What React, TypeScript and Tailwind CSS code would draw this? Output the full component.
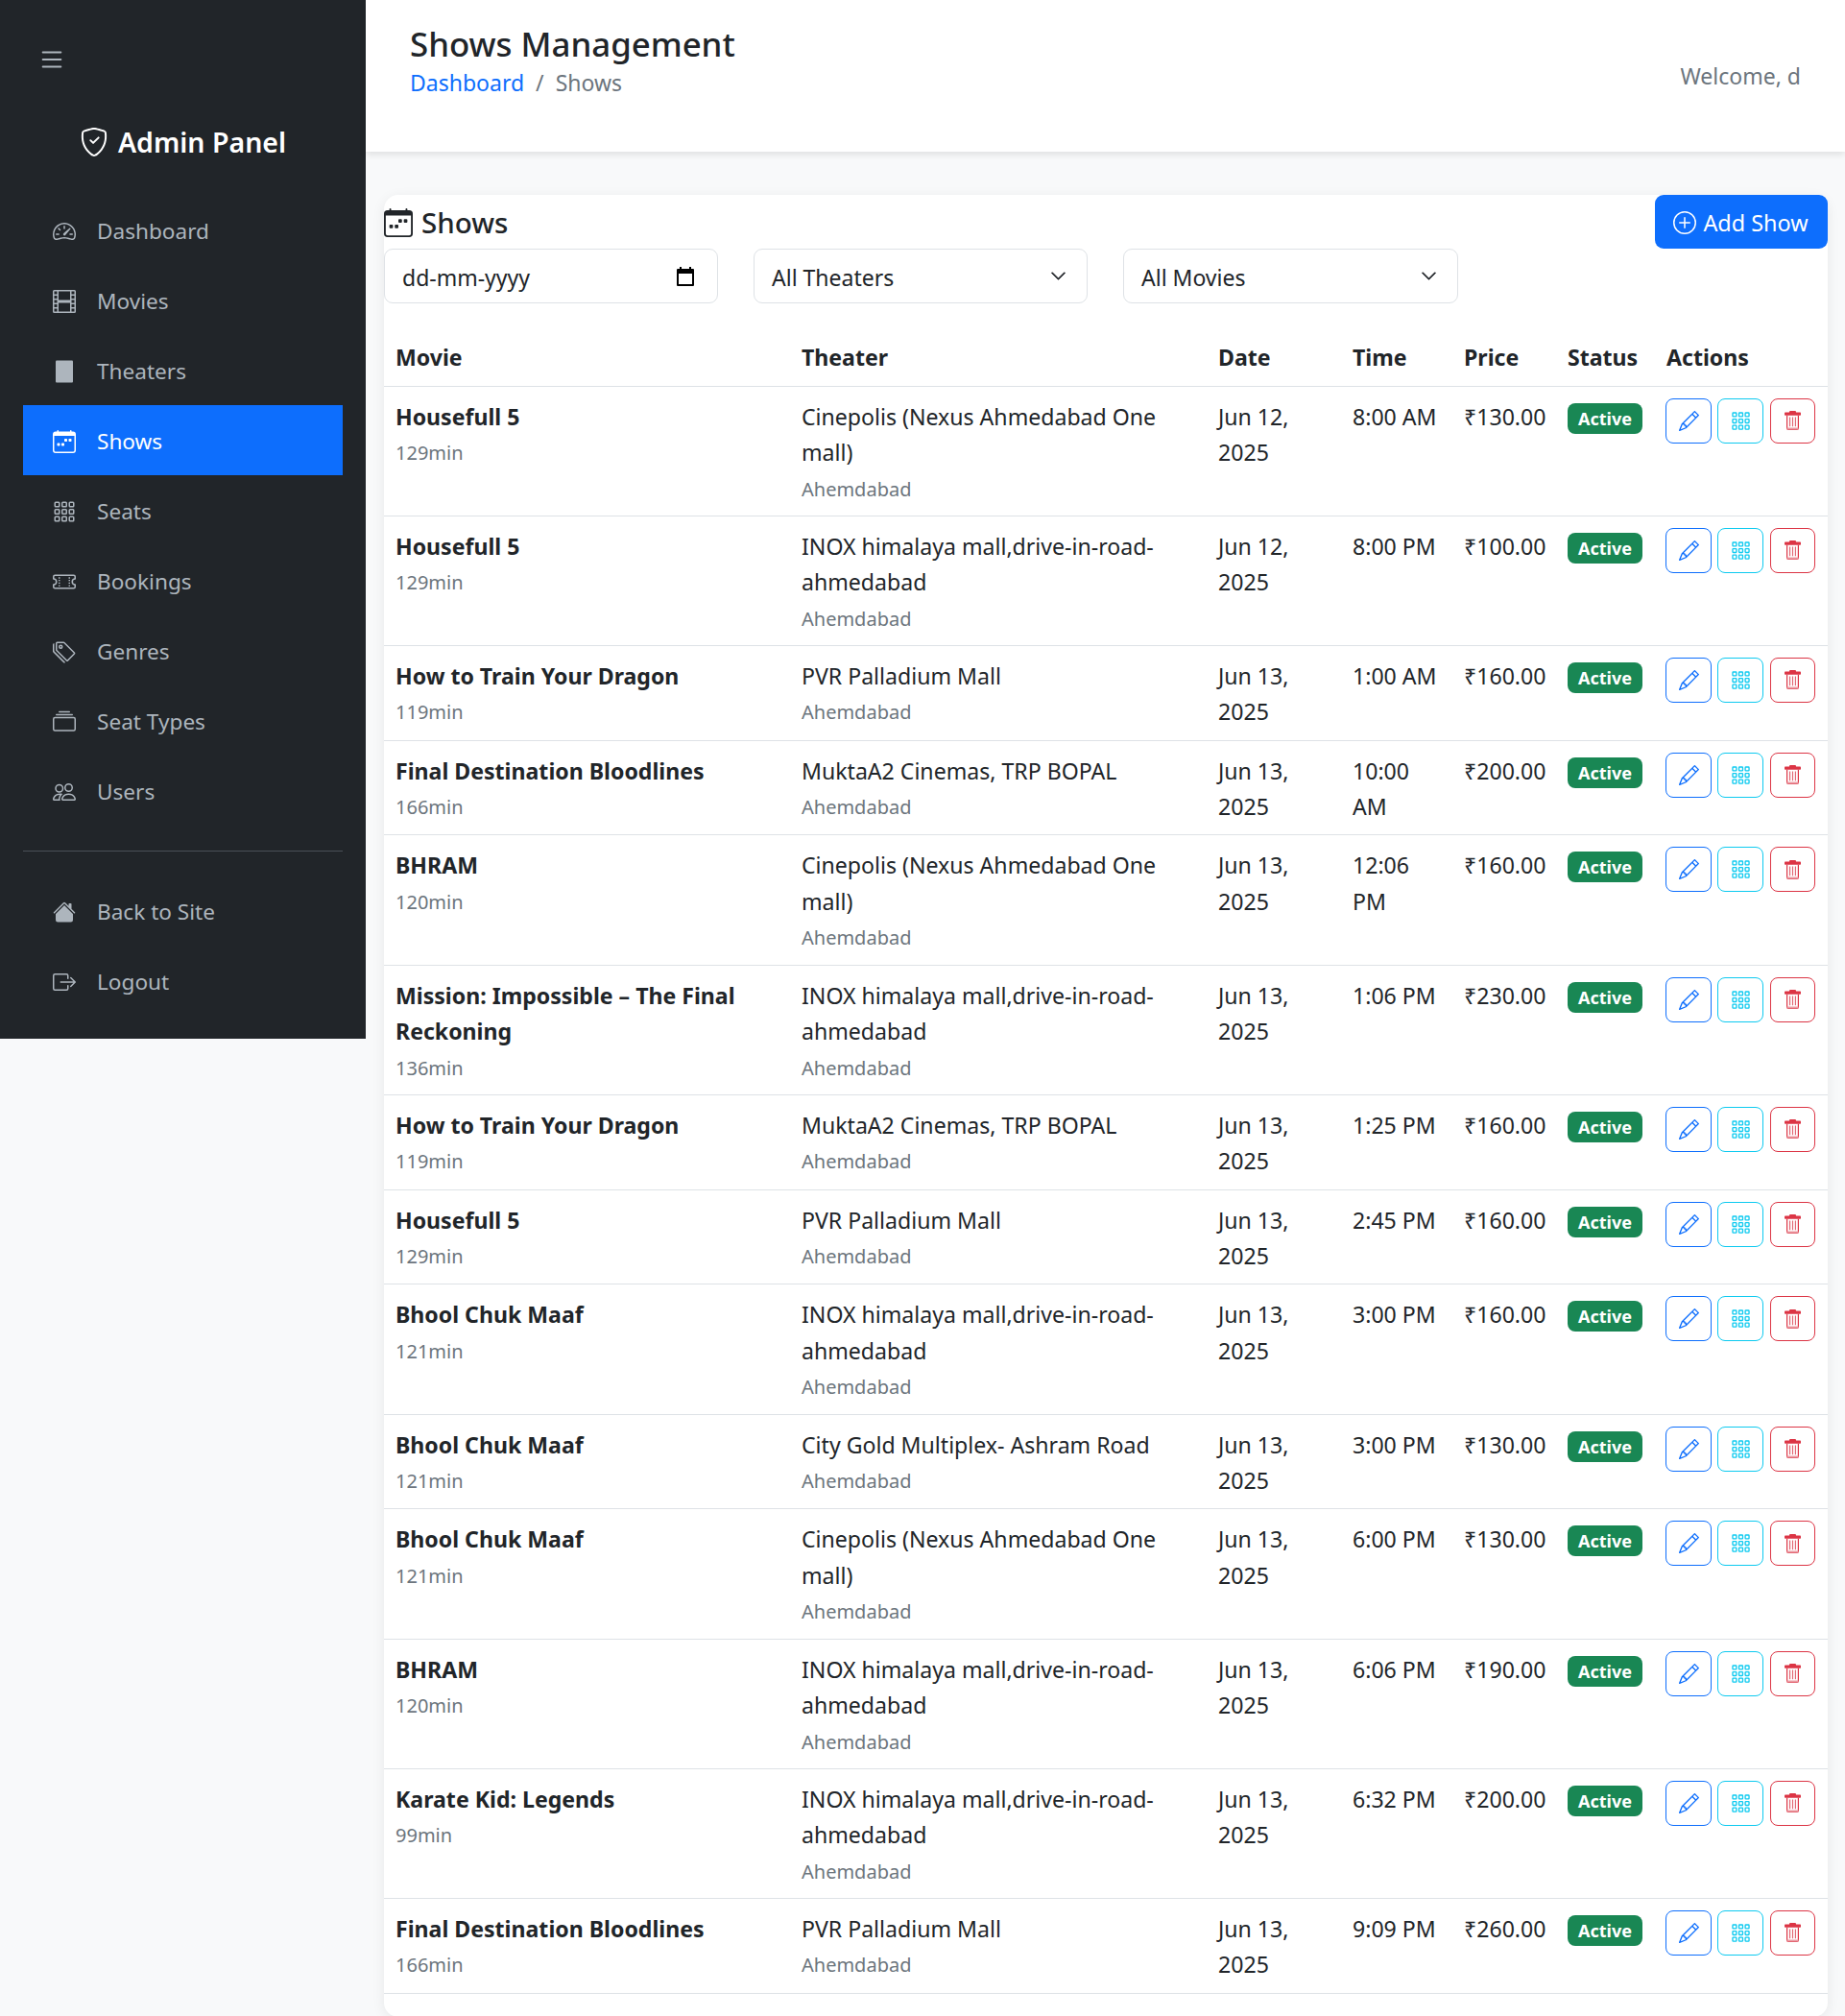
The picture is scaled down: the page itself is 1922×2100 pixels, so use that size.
import React from "react";
import {
  BsList, BsShieldCheck, BsSpeedometer2, BsFilm, BsCalendarWeek, BsGrid3X3Gap, BsTicketPerforated,
  BsTags, BsCollection, BsPeople, BsHouseFill, BsBoxArrowRight, BsPencil, BsPlusCircle, BsChevronDown,
} from "react-icons/bs";

const TheaterIcon = () => (
  <svg width="24" height="24" viewBox="0 0 24 24" fill="currentColor"><rect x="3" y="0.5" width="18" height="23" rx="1" /></svg>
);

const TrashIcon = () => (
  <svg width="17" height="20" viewBox="0 0 17 20">
    <rect x="5" y="0" width="7" height="3" rx="1" fill="#dc3545" />
    <rect x="0" y="1.5" width="17" height="3.2" rx="0.8" fill="#dc3545" />
    <path d="M2.6 4.7V18a1.4 1.4 0 0 0 1.4 1.4h9a1.4 1.4 0 0 0 1.4-1.4V4.7" fill="none" stroke="#dc3545" strokeWidth="1.2" />
    <path d="M2.6 17.5h11.8v2H2.6z" fill="#eb9aa2" />
    <path d="M5.6 6.6v9.6M8.5 6.6v9.6M11.4 6.6v9.6" stroke="#e0606d" strokeWidth="1.1" />
  </svg>
);

const nav = [
  { label: "Dashboard", icon: <BsSpeedometer2 size={24} /> },
  { label: "Movies", icon: <BsFilm size={24} /> },
  { label: "Theaters", icon: <TheaterIcon /> },
  { label: "Shows", icon: <BsCalendarWeek size={24} />, active: true },
  { label: "Seats", icon: <BsGrid3X3Gap size={24} /> },
  { label: "Bookings", icon: <BsTicketPerforated size={24} /> },
  { label: "Genres", icon: <BsTags size={24} /> },
  { label: "Seat Types", icon: <BsCollection size={24} /> },
  { label: "Users", icon: <BsPeople size={24} /> },
];
const nav2 = [
  { label: "Back to Site", icon: <BsHouseFill size={24} /> },
  { label: "Logout", icon: <BsBoxArrowRight size={24} /> },
];

const CN = "Cinepolis (Nexus Ahmedabad One mall)";
const IN = "INOX himalaya mall,drive-in-road-ahmedabad";
const PV = "PVR Palladium Mall";
const MK = "MuktaA2 Cinemas, TRP BOPAL";
const rows = [
  ["Housefull 5", "129min", CN, "Jun 12, 2025", "8:00 AM", "₹130.00"],
  ["Housefull 5", "129min", IN, "Jun 12, 2025", "8:00 PM", "₹100.00"],
  ["How to Train Your Dragon", "119min", PV, "Jun 13, 2025", "1:00 AM", "₹160.00"],
  ["Final Destination Bloodlines", "166min", MK, "Jun 13, 2025", "10:00 AM", "₹200.00"],
  ["BHRAM", "120min", CN, "Jun 13, 2025", "12:06 PM", "₹160.00"],
  ["Mission: Impossible – The Final Reckoning", "136min", IN, "Jun 13, 2025", "1:06 PM", "₹230.00"],
  ["How to Train Your Dragon", "119min", MK, "Jun 13, 2025", "1:25 PM", "₹160.00"],
  ["Housefull 5", "129min", PV, "Jun 13, 2025", "2:45 PM", "₹160.00"],
  ["Bhool Chuk Maaf", "121min", IN, "Jun 13, 2025", "3:00 PM", "₹160.00"],
  ["Bhool Chuk Maaf", "121min", "City Gold Multiplex- Ashram Road", "Jun 13, 2025", "3:00 PM", "₹130.00"],
  ["Bhool Chuk Maaf", "121min", CN, "Jun 13, 2025", "6:00 PM", "₹130.00"],
  ["BHRAM", "120min", IN, "Jun 13, 2025", "6:06 PM", "₹190.00"],
  ["Karate Kid: Legends", "99min", IN, "Jun 13, 2025", "6:32 PM", "₹200.00"],
  ["Final Destination Bloodlines", "166min", PV, "Jun 13, 2025", "9:09 PM", "₹260.00"],
];

function NavItem({ label, icon, active }: { label: string; icon: React.ReactNode; active?: boolean }) {
  return (
    <a className={`flex h-[73px] items-center gap-[22px] pl-[31px] pt-[3px] text-[22.6px] ${active ? "bg-[#0d6efd] text-white" : "text-[#adb5bd]"}`}>
      {icon}
      <span>{label}</span>
    </a>
  );
}

function Filter({ label, icon, w }: { label: string; icon: React.ReactNode; w: string }) {
  return (
    <div className={`flex h-[57px] items-center justify-between rounded-[9px] border border-[#dee2e6] bg-white pl-[18px] pr-[21px] text-[#212529] ${w}`}>
      <span className="pt-[2px]">{label}</span>
      {icon}
    </div>
  );
}

const DateIcon = () => (
  <svg width="24" height="24" viewBox="0 0 24 24" className="text-black"><path fill="currentColor" d="M6 2h2v2h8V2h2v2h2a1 1 0 0 1 1 1v16a1 1 0 0 1-1 1H4a1 1 0 0 1-1-1V5a1 1 0 0 1 1-1h2V2Zm-1 7v11h14V9H5Z" /></svg>
);

const cell = "px-[12px] pb-[8.7px] pt-[13px]";

export default function App() {
  return (
    <div className="flex min-h-screen bg-[#f8f9fa] font-['Noto_Sans',sans-serif] text-[23px] leading-[36px] text-[#212529]">
      <aside className="w-[381px] shrink-0 self-start bg-[#212529] px-[24px] pb-[24px]">
        <div className="flex h-[123px] items-center pl-[15px] text-[#adb5bd]"><BsList size={30} /></div>
        <div className="flex h-[50px] items-center justify-center gap-[10px] text-[28.5px] font-semibold text-white"><BsShieldCheck size={30} />Admin Panel</div>
        <div className="h-[30px]" />
        <nav>{nav.map((n) => <NavItem key={n.label} {...n} />)}</nav>
        <div className="mb-[25px] mt-[26px] border-t border-[#495057]" />
        <nav>{nav2.map((n) => <NavItem key={n.label} {...n} />)}</nav>
      </aside>
      <main className="min-w-0 flex-1">
        <header className="flex h-[158px] items-center justify-between bg-white pl-[46px] pr-[46px] shadow-[0_3px_7px_rgba(0,0,0,0.1)]">
          <div className="self-start pt-[24px]">
            <h1 className="text-[34.8px] font-medium leading-[44px]">Shows Management</h1>
            <div className="flex gap-[12px] leading-[36px]"><a className="text-[#0d6efd]">Dashboard</a><span className="text-[#6c757d]">/</span><span className="text-[#6c757d]">Shows</span></div>
          </div>
          <div className="text-[#6c757d]">Welcome, d</div>
        </header>
        <div className="pl-[19px] pr-[18px] pt-[45px]">
          <section className="rounded-[15px] bg-white pb-[24px] shadow-[0_3px_14px_rgba(0,0,0,0.07)]">
            <div className="flex items-start justify-between">
              <h2 className="flex h-[56px] items-center gap-[9px] pt-[2px] text-[29.5px] font-medium"><BsCalendarWeek size={30} />Shows</h2>
              <button className="flex h-[56px] w-[180px] items-center justify-center gap-[7px] rounded-[9px] bg-[#0d6efd] pr-[1px] pt-[1px] text-[23.4px] text-white"><BsPlusCircle size={24} />Add Show</button>
            </div>
            <div className="flex gap-[37px]">
              <Filter w="w-[348px]" label="dd-mm-yyyy" icon={<DateIcon />} />
              <Filter w="w-[348px]" label="All Theaters" icon={<BsChevronDown size={17} strokeWidth={0.8} />} />
              <Filter w="w-[349px]" label="All Movies" icon={<BsChevronDown size={17} strokeWidth={0.8} />} />
            </div>
            <table className="mt-[25px] w-full table-fixed border-collapse text-left text-[23.1px] leading-[37.5px]">
              <colgroup>
                <col className="w-[423px]" /><col className="w-[434px]" /><col className="w-[140px]" /><col className="w-[116px]" /><col className="w-[108px]" /><col className="w-[103px]" /><col className="w-[180px]" />
              </colgroup>
              <thead>
                <tr className="border-b border-[#dee2e6]">
                  {["Movie", "Theater", "Date", "Time", "Price", "Status", "Actions"].map((h) => (
                    <th key={h} className="px-[12px] pb-[10px] pt-[13px] font-bold">{h}</th>
                  ))}
                </tr>
              </thead>
              <tbody>
                {rows.map((r, i) => (
                  <tr key={i} className="h-[98.8px] border-b border-[#dee2e6] align-top">
                    <td className={cell}><div className="font-bold">{r[0]}</div><div className="text-[20px] text-[#6c757d]">{r[1]}</div></td>
                    <td className={cell}><div>{r[2]}</div><div className="text-[20px] text-[#6c757d]">Ahemdabad</div></td>
                    <td className={cell}>{r[3]}</td>
                    <td className={cell}>{r[4]}</td>
                    <td className={cell}>{r[5]}</td>
                    <td className={cell}><span className="mt-[4px] flex h-[32px] w-[78px] items-center justify-center rounded-[8px] bg-[#198754] text-[18px] font-bold leading-none text-white">Active</span></td>
                    <td className={cell}>
                      <div className="-ml-[1px] -mt-[1px] flex gap-[6px]">
                        <button className="flex h-[47px] w-[48px] items-center justify-center rounded-[8px] border border-[#0d6efd] text-[#0d6efd]"><BsPencil size={21} /></button>
                        <button className="flex h-[47px] w-[48px] items-center justify-center rounded-[8px] border border-[#0dcaf0] text-[#0dcaf0]"><BsGrid3X3Gap size={21} /></button>
                        <button className="ml-[1px] flex h-[47px] w-[47px] items-center justify-center rounded-[8px] border border-[#dc3545]"><TrashIcon /></button>
                      </div>
                    </td>
                  </tr>
                ))}
              </tbody>
            </table>
          </section>
        </div>
      </main>
    </div>
  );
}
